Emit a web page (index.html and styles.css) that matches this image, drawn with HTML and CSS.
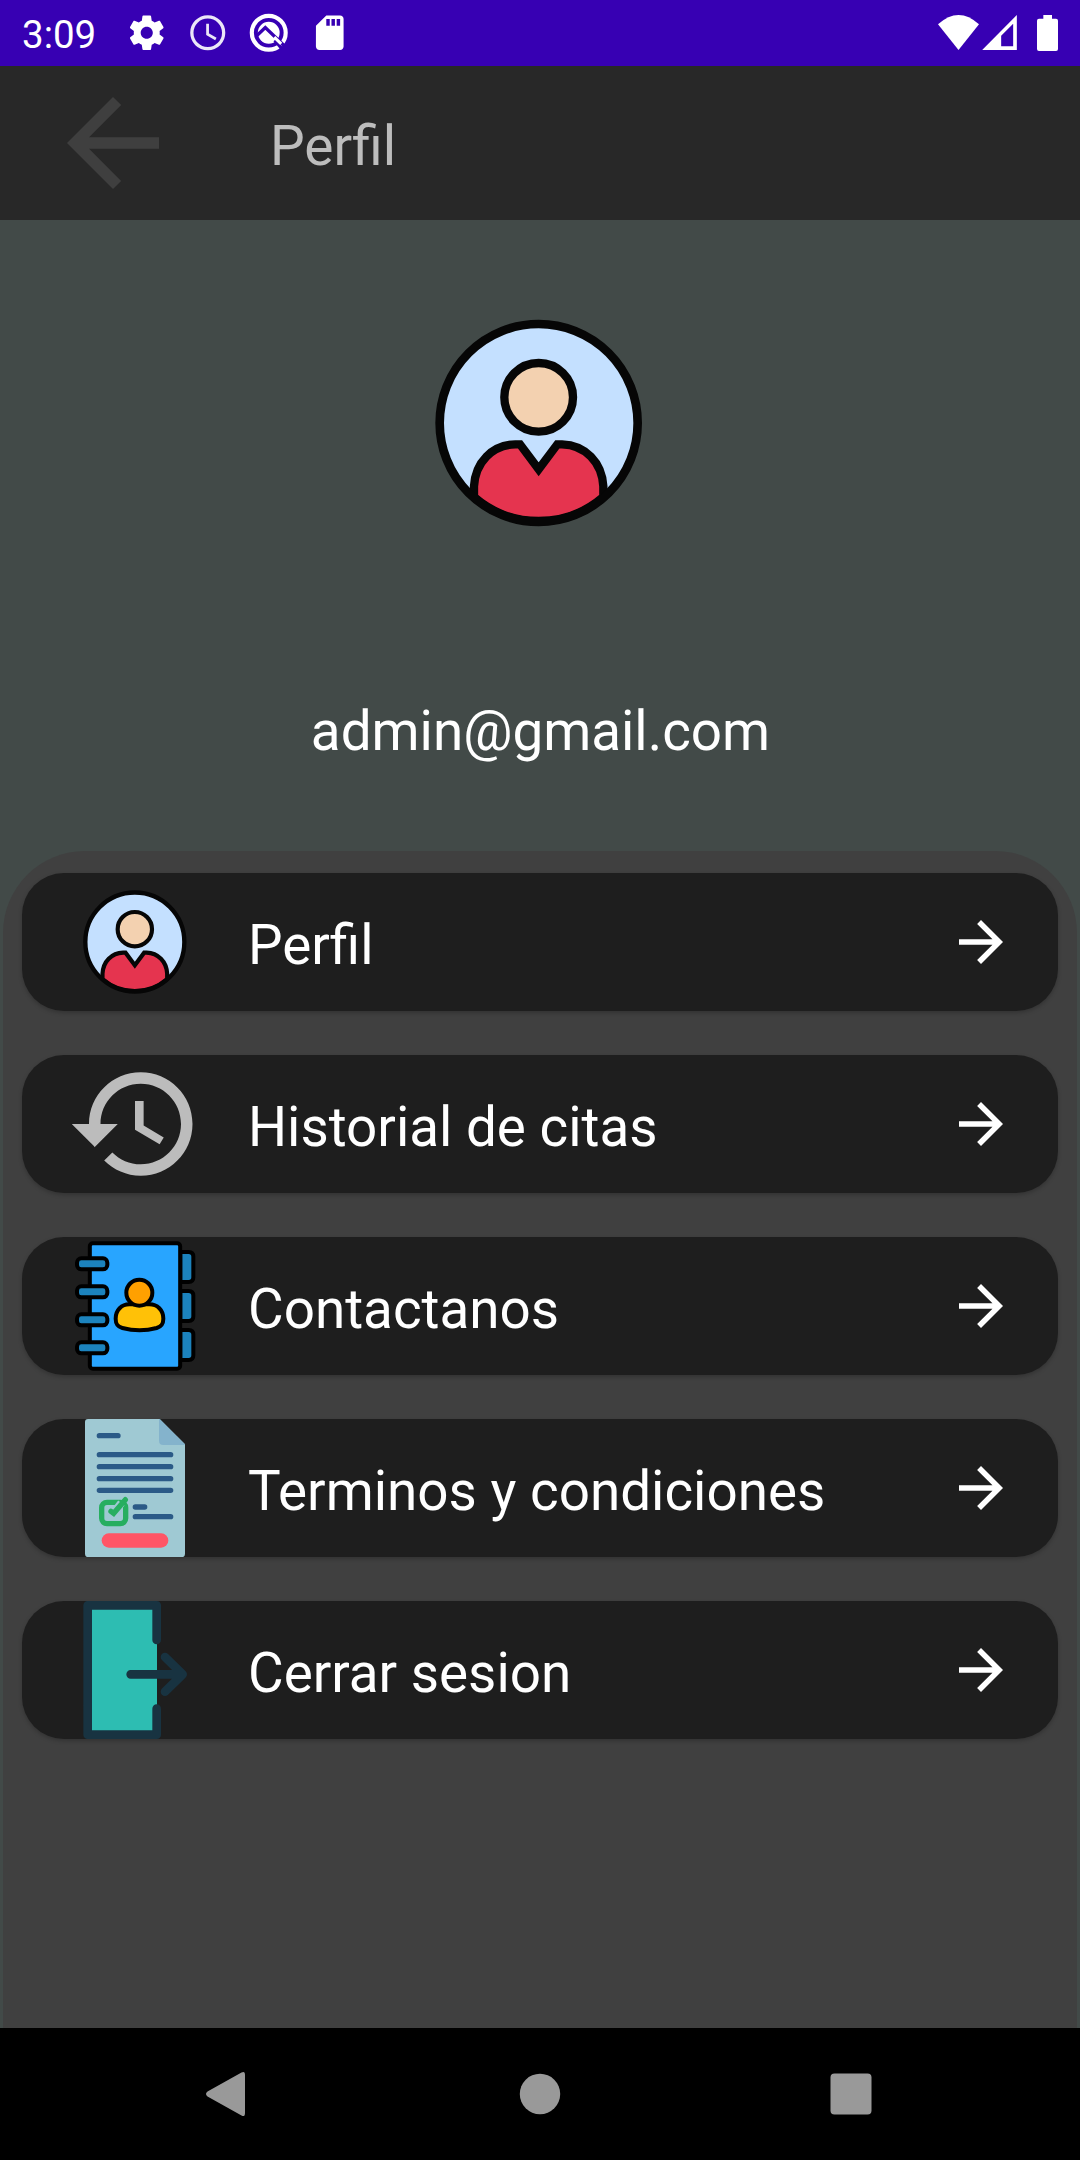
FILE: index.html
```html
<!DOCTYPE html>
<html lang="es">
<head>
<meta charset="utf-8">
<title>Perfil</title>
<link rel="stylesheet" href="styles.css">
</head>
<body>
<svg class="sprite" aria-hidden="true">
  <symbol id="person" viewBox="44 58 624 624">
    <circle cx="355" cy="370" r="297" fill="#c4e0ff"/>
    <path d="M161 592V560C165 488 215 436 285 434H299L355 509L411 434H425C495 436 545 488 549 560V592A297 297 0 0 1 161 592Z" fill="#e5344f" stroke="#060606" stroke-width="25"/>
    <circle cx="355" cy="370" r="297" fill="none" stroke="#060606" stroke-width="26"/>
    <circle cx="355" cy="293" r="103" fill="#f3d1b0" stroke="#060606" stroke-width="25"/>
  </symbol>
  <symbol id="forward" viewBox="0 0 24 24">
    <path d="M12 4l-1.41 1.41L16.17 11H4v2h12.17l-5.58 5.59L12 20l8-8z" fill="#fff"/>
  </symbol>
</svg>
<div class="screen">
  <div class="status">
    <span class="time">3:09</span>
    <div class="notifications">
      <svg viewBox="0 0 24 24"><path fill="#fff" d="M19.43 12.98c.04-.32.07-.64.07-.98s-.03-.66-.07-.98l2.11-1.65c.19-.15.24-.42.12-.64l-2-3.46c-.12-.22-.39-.3-.61-.22l-2.49 1c-.52-.4-1.08-.73-1.69-.98l-.38-2.65C14.46 2.18 14.25 2 14 2h-4c-.25 0-.46.18-.49.42l-.38 2.65c-.61.25-1.17.59-1.69.98l-2.49-1c-.23-.09-.49 0-.61.22l-2 3.46c-.13.22-.07.49.12.64l2.11 1.65c-.04.32-.07.65-.07.98s.03.66.07.98l-2.11 1.65c-.19.15-.24.42-.12.64l2 3.46c.12.22.39.3.61.22l2.49-1c.52.4 1.08.73 1.69.98l.38 2.65c.03.24.24.42.49.42h4c.25 0 .46-.18.49-.42l.38-2.65c.61-.25 1.17-.59 1.69-.98l2.49 1c.23.09.49 0 .61-.22l2-3.46c.12-.22.07-.49-.12-.64l-2.11-1.65zM12 15.5c-1.93 0-3.5-1.57-3.5-3.5s1.57-3.5 3.5-3.5 3.5 1.57 3.5 3.5-1.57 3.5-3.5 3.5z"/></svg>
      <svg viewBox="0 0 24 24" fill="none" stroke="#fff" stroke-opacity=".9"><circle cx="12" cy="12" r="9.2" stroke-width="1.9"/><path d="M11.9 6.8v6l4.800 2.800" stroke-width="1.600"/></svg>
      <svg viewBox="0 0 24 24"><circle cx="12" cy="12" r="9.8" fill="none" stroke="#fff" stroke-width="2.4"/><circle cx="12" cy="12" r="6.3" fill="#fff"/><path d="M5.2 13.6L10 9l11 10.5" fill="none" stroke="#3700b3" stroke-width="1.9"/><path d="M15.5 16.3l4.2 5" fill="none" stroke="#3700b3" stroke-width="2"/><path d="M15.2 14.6l4 3.8" fill="none" stroke="#fff" stroke-width="1.8"/></svg>
      <svg viewBox="0 0 24 24"><path fill="#fff" d="M18 2h-8L4.020 8 4 20c0 1.100.9 2 2 2h12c1.100 0 2-.9 2-2V4c0-1.100-.9-2-2-2zm-6 6h-2V4h2v4zm3 0h-2V4h2v4zm3 0h-2V4h2v4z"/></svg>
    </div>
    <div class="system">
      <svg class="wifi" viewBox="0 0 123 105"><path d="M0 28Q62-28 123 28L61.500 105Z" fill="#fff"/></svg>
      <svg class="signal" viewBox="0 0 104 105"><path d="M104 0V105H0ZM93 26L57 62V94H93Z" fill="#fff" fill-rule="evenodd"/></svg>
      <svg class="battery" viewBox="0 0 63 108"><path d="M19 0H45V11H57Q63 11 63 17V102Q63 108 57 108H6Q0 108 0 102V17Q0 11 6 11H19Z" fill="#fff"/></svg>
    </div>
  </div>

  <header class="toolbar">
    <svg class="back" viewBox="0 0 24 24"><path d="M20 11H7.830l5.590-5.590L12 4l-8 8 8 8 1.410-1.410L7.830 13H20v-2z" fill="#3f3f3f"/></svg>
    <h1>Perfil</h1>
  </header>

  <section class="account">
    <svg class="avatar"><use href="#person"/></svg>
    <p>admin@gmail.com</p>
  </section>

  <main class="panel">
    <a class="card">
      <span class="icon"><svg class="small-avatar"><use href="#person"/></svg></span>
      <span class="label">Perfil</span>
      <svg class="arrow"><use href="#forward"/></svg>
    </a>
    <a class="card">
      <svg class="icon" viewBox="0 0 24 24"><path fill="#bcbcbc" d="M13 3c-4.970 0-9 4.030-9 9H1l3.890 3.890.07.14L9 12H6c0-3.870 3.130-7 7-7s7 3.130 7 7-3.130 7-7 7c-1.930 0-3.680-.79-4.940-2.060l-1.420 1.420C8.270 19.990 10.510 21 13 21c4.970 0 9-4.030 9-9s-4.030-9-9-9zm-1 5v5l4.280 2.540.72-1.210-3.500-2.080V8H12z"/></svg>
      <span class="label">Historial de citas</span>
      <svg class="arrow"><use href="#forward"/></svg>
    </a>
    <a class="card">
      <svg class="icon" viewBox="78 51 414 414" stroke="#000" stroke-width="12">
        <g fill="#1c83bd">
          <path d="M421 96H446Q460 96 460 110V172Q460 186 446 186H421Z"/>
          <path d="M421 213H446Q460 213 460 227V289Q460 303 446 303H421Z"/>
          <path d="M421 330H446Q460 330 460 344V406Q460 420 446 420H421Z"/>
        </g>
        <rect x="149.500" y="70" width="271" height="376" rx="9" fill="#28a5ff"/>
        <g fill="#1c83bd">
          <rect x="111" y="115" width="91" height="33" rx="13"/>
          <rect x="111" y="199" width="91" height="33" rx="13"/>
          <rect x="111" y="283" width="91" height="33" rx="13"/>
          <rect x="111" y="367" width="91" height="33" rx="13"/>
        </g>
        <path d="M227 296C227 270 245 253 268 253H328C352 253 370 270 370 296C370 314 363 320 350 324Q299 338 247 324C233 320 227 314 227 296Z" fill="#ffc107"/>
        <circle cx="298" cy="218" r="39" fill="#ffa000"/>
      </svg>
      <span class="label">Contactanos</span>
      <svg class="arrow"><use href="#forward"/></svg>
    </a>
    <a class="card">
      <svg class="icon" viewBox="78 57 414 414">
        <path d="M144 57H359L435 133V461Q435 471 425 471H145Q135 471 135 461V66Q135 57 144 57Z" fill="#9fc9d3"/>
        <path d="M357 57H359L435 133V135H370Q357 135 357 122Z" fill="#84b3cc"/>
        <g stroke="#2b5a87" stroke-width="16" stroke-linecap="round">
          <path d="M178 107H234M178 164H392M178 200H392M178 236H392M178 271H392M286 321H314M286 350H392"/>
        </g>
        <rect x="185" y="307" width="72" height="64" rx="16" fill="none" stroke="#27ae60" stroke-width="16"/>
        <path d="M244 309L226 332" fill="none" stroke="#9fc9d3" stroke-width="24"/>
        <path d="M256 299L221 340L213 334" fill="none" stroke="#27ae60" stroke-width="16" stroke-linecap="round"/>
        <rect x="185" y="400" width="200" height="43" rx="21.500" fill="#ff5566"/>
      </svg>
      <span class="label">Terminos y condiciones</span>
      <svg class="arrow"><use href="#forward"/></svg>
    </a>
    <a class="card">
      <svg class="icon" viewBox="78 63 414 414">
        <rect x="143" y="76" width="208" height="388" fill="#2dbdb2"/>
        <g fill="none" stroke="#183341" stroke-width="26" stroke-linecap="round" stroke-linejoin="round">
          <path d="M350 180V76H143V464H350V386"/>
          <path d="M272 283H427M375 231L428 283L375 335"/>
        </g>
      </svg>
      <span class="label">Cerrar sesion</span>
      <svg class="arrow"><use href="#forward"/></svg>
    </a>
  </main>

  <nav class="navbar">
    <svg viewBox="0 0 46 46"><path d="M42.500 1.500Q46 -.5 46 4V42Q46 46.500 42.500 44.500L8.500 25.500Q5.500 23 8.500 20.500Z" fill="#999"/></svg>
    <svg viewBox="0 0 46 46"><circle cx="23" cy="23" r="20.200" fill="#999"/></svg>
    <svg viewBox="0 0 46 46"><rect x="2.500" y="2.500" width="41" height="41" rx="4" fill="#999"/></svg>
  </nav>
</div>
</body>
</html>
```
FILE: styles.css
```css
* { box-sizing: border-box; }

body {
  margin: 0;
  font-family: Roboto, "Liberation Sans", sans-serif;
  color: #fff;
}

svg { display: block; flex: none; }

.sprite { position: absolute; width: 0; height: 0; }

.screen {
  display: flex;
  flex-direction: column;
  width: 1080px;
  height: 2160px;
  overflow: hidden;
  background: #424a48;
}

.status {
  display: flex;
  align-items: center;
  height: 66px;
  padding: 0 22px;
  background: #3700b3;
}

.time {
  width: 103.5px;
  padding-top: 3px;
  font-size: 38.5px;
  line-height: 44px;
}

.notifications {
  display: flex;
  gap: 19.6px;
}

.notifications svg { width: 41.5px; height: 41.5px; }

.system {
  display: flex;
  align-items: flex-start;
  height: 36px;
  margin-left: auto;
}

.wifi { width: 41px; height: 35px; }
.signal { width: 35px; height: 35px; margin-left: 3px; }
.battery { width: 21px; height: 36px; margin-left: 20px; }

.toolbar {
  display: flex;
  align-items: center;
  height: 154px;
  padding-left: 44px;
  background: #282828;
}

.back { width: 138px; height: 138px; }

.toolbar h1 {
  margin: 0 0 0 88px;
  padding-top: 6px;
  font-size: 55px;
  font-weight: 400;
  line-height: 64px;
  color: #bdbdbd;
}

.account {
  display: flex;
  flex-direction: column;
  align-items: center;
  height: 631px;
  padding-top: 99px;
}

.avatar { width: 208px; height: 208px; margin-right: 3px; }

.account p {
  margin: 172px 0 0 1px;
  font-size: 54.8px;
  line-height: 64px;
}

.panel {
  display: flex;
  flex: 1;
  flex-direction: column;
  gap: 44px;
  margin: 0 3px;
  padding: 22px 19px;
  border-radius: 82px 82px 0 0;
  background: #404040;
}

.card {
  display: flex;
  align-items: center;
  height: 138px;
  padding: 0 44px;
  border-radius: 42px;
  background: #1e1e1e;
  box-shadow: 0 2px 4px rgba(0, 0, 0, .22);
}

.icon {
  display: flex;
  align-items: center;
  justify-content: center;
  width: 138px;
  height: 138px;
}

.small-avatar { width: 104px; height: 104px; }

.label {
  flex: 1;
  margin-left: 44px;
  padding-top: 6px;
  font-size: 54.8px;
  line-height: 64px;
}

.arrow { width: 66px; height: 66px; }

.navbar {
  display: flex;
  align-items: flex-start;
  height: 132px;
  padding: 43px 0 0 199px;
  background: #000;
}

.navbar svg { width: 46px; height: 46px; }
.navbar svg:nth-child(2) { margin: 0 265px 0 272px; }
```
